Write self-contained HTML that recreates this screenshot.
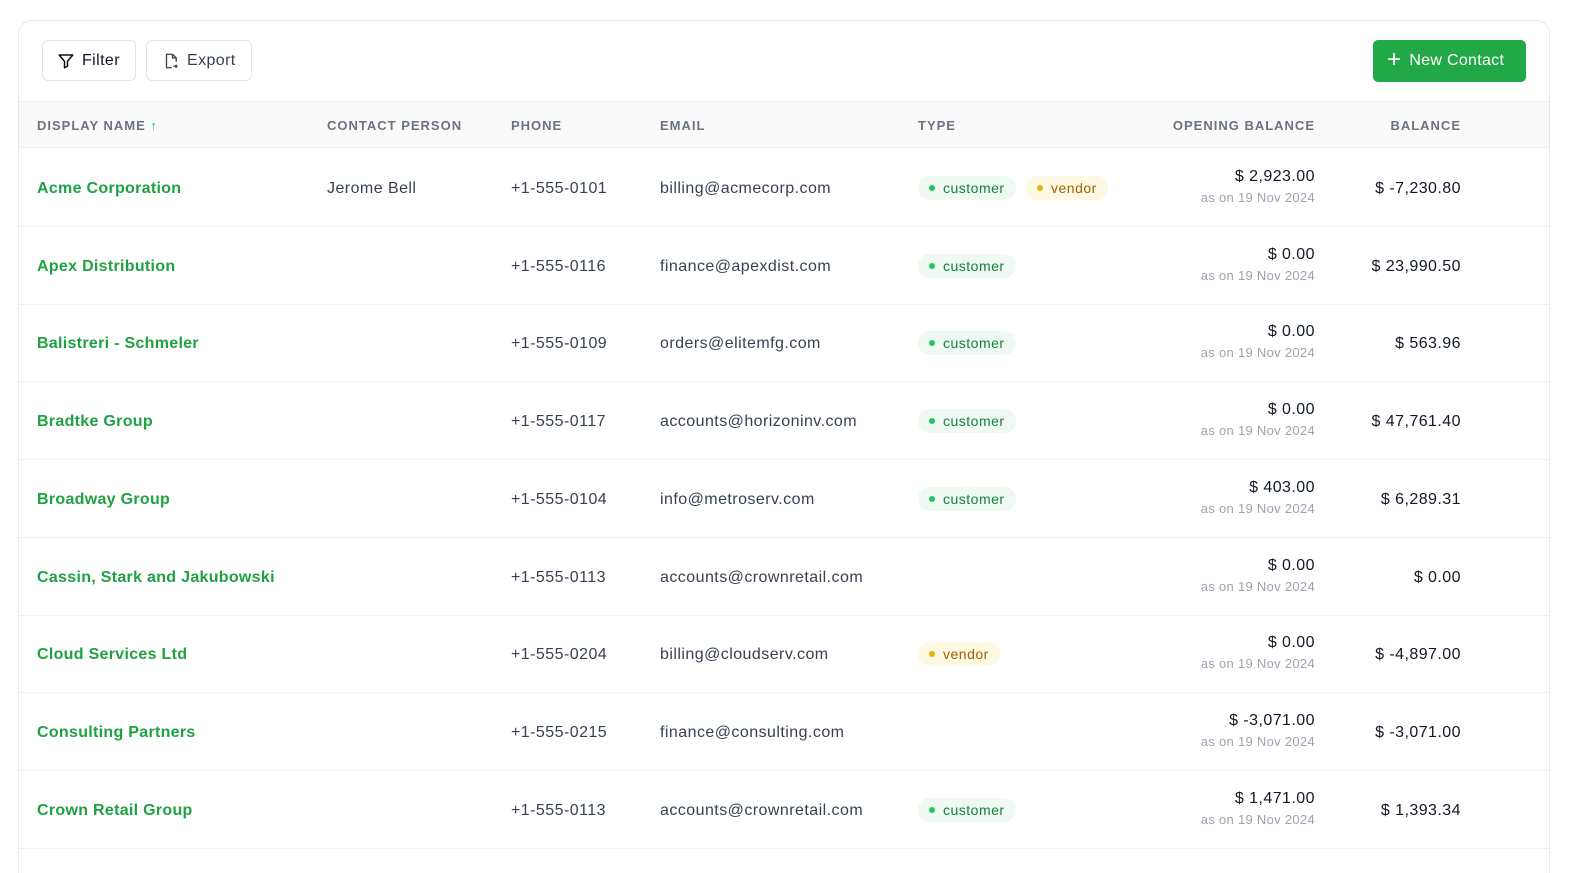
<!DOCTYPE html>
<html><head><meta charset="utf-8"><style>
*{box-sizing:border-box;margin:0;padding:0}
html,body{width:1581px;height:873px;overflow:hidden}
body{background:#fff;font-family:"Liberation Sans",sans-serif;position:relative}
.card{position:absolute;left:18px;top:20px;width:1532px;height:880px;border:1px solid #e5e7eb;border-radius:14px;overflow:hidden}
.btn{position:absolute;top:19px;height:41px;border:1px solid #e2e4e8;border-radius:6px;background:#fff;display:flex;align-items:center;font-size:16px;color:#111827;letter-spacing:0.4px}
.new{position:absolute;left:1354px;top:19px;width:153px;height:42px;background:#22a846;border-radius:5px;color:#fff;font-size:16px;display:flex;align-items:center;padding-left:14px;letter-spacing:0.3px}
.head{position:absolute;left:0;top:80px;width:100%;height:47px;background:#fafafa;border-top:1px solid #efefef;border-bottom:1px solid #efefef}
.h{position:absolute;top:16px;font-size:13px;letter-spacing:1px;color:#6b7280;font-weight:bold}
.row{position:absolute;left:0;width:100%;height:78px;border-bottom:1px solid #f1f1f1;font-size:16px;color:#374151;letter-spacing:0.45px}
.row span{position:absolute;top:31px}
.n{left:18px;color:#1fa142;font-weight:bold;letter-spacing:0.3px}
.ob{right:234px;top:19px!important;color:#111827;text-align:right}
.ob small{display:block;font-size:13px;color:#9ca3af;margin-top:4px;letter-spacing:0.3px}
.bal{right:88px;color:#111827}
.tag{top:27px!important;height:24px;border-radius:12px;font-size:14px;padding:4px 11px 0 25px;letter-spacing:0.5px}
.tag:before{content:"";position:absolute;left:11px;top:9px;width:6px;height:6px;border-radius:3px}
.c{background:#eefaf1;color:#15803d}.c:before{background:#22c55e}
.v{background:#fef9e3;color:#a16207}.v:before{background:#eab308}
</style></head><body>
<div class="card">
<div class="btn" style="left:23px;width:94px;padding-left:14px"><svg width="18" height="18" viewBox="0 0 24 24" fill="none" stroke="#111" stroke-width="2" stroke-linejoin="round"><path d="M3 4h18l-7 8.5V19l-4 2v-8.5z"/></svg><span style="margin-left:7px">Filter</span></div>
<div class="btn" style="left:127px;width:106px;padding-left:15px;color:#374151"><svg width="18" height="18" viewBox="0 0 24 24" fill="none" stroke="#444" stroke-width="1.8" stroke-linejoin="round"><path d="M14 3H6v18h7M14 3l5 5v5M14 3v5h5M15 19h5m-2-2 2 2-2 2"/></svg><span style="margin-left:7px">Export</span></div>
<div class="new"><span style="font-size:24px;font-weight:300;margin-right:8px;margin-top:-3px">+</span>New Contact</div>
<div class="head">
<span class="h" style="left:18px">DISPLAY NAME <span style="color:#22c55e">↑</span></span>
<span class="h" style="left:308px">CONTACT PERSON</span>
<span class="h" style="left:492px">PHONE</span>
<span class="h" style="left:641px">EMAIL</span>
<span class="h" style="left:899px">TYPE</span>
<span class="h" style="right:234px">OPENING BALANCE</span>
<span class="h" style="right:88px">BALANCE</span>
</div>
<div class="row" style="top:128px"><span class="n">Acme Corporation</span><span style="left:308px">Jerome Bell</span><span style="left:492px">+1-555-0101</span><span style="left:641px">billing@acmecorp.com</span><span class="tag c" style="left:899px">customer</span><span class="tag v" style="left:1007px">vendor</span><span class="ob">$ 2,923.00<small>as on 19 Nov 2024</small></span><span class="bal">$ -7,230.80</span></div>
<div class="row" style="top:206px"><span class="n">Apex Distribution</span><span style="left:492px">+1-555-0116</span><span style="left:641px">finance@apexdist.com</span><span class="tag c" style="left:899px">customer</span><span class="ob">$ 0.00<small>as on 19 Nov 2024</small></span><span class="bal">$ 23,990.50</span></div>
<div class="row" style="top:283px"><span class="n">Balistreri - Schmeler</span><span style="left:492px">+1-555-0109</span><span style="left:641px">orders@elitemfg.com</span><span class="tag c" style="left:899px">customer</span><span class="ob">$ 0.00<small>as on 19 Nov 2024</small></span><span class="bal">$ 563.96</span></div>
<div class="row" style="top:361px"><span class="n">Bradtke Group</span><span style="left:492px">+1-555-0117</span><span style="left:641px">accounts@horizoninv.com</span><span class="tag c" style="left:899px">customer</span><span class="ob">$ 0.00<small>as on 19 Nov 2024</small></span><span class="bal">$ 47,761.40</span></div>
<div class="row" style="top:439px"><span class="n">Broadway Group</span><span style="left:492px">+1-555-0104</span><span style="left:641px">info@metroserv.com</span><span class="tag c" style="left:899px">customer</span><span class="ob">$ 403.00<small>as on 19 Nov 2024</small></span><span class="bal">$ 6,289.31</span></div>
<div class="row" style="top:517px"><span class="n">Cassin, Stark and Jakubowski</span><span style="left:492px">+1-555-0113</span><span style="left:641px">accounts@crownretail.com</span><span class="ob">$ 0.00<small>as on 19 Nov 2024</small></span><span class="bal">$ 0.00</span></div>
<div class="row" style="top:594px"><span class="n">Cloud Services Ltd</span><span style="left:492px">+1-555-0204</span><span style="left:641px">billing@cloudserv.com</span><span class="tag v" style="left:899px">vendor</span><span class="ob">$ 0.00<small>as on 19 Nov 2024</small></span><span class="bal">$ -4,897.00</span></div>
<div class="row" style="top:672px"><span class="n">Consulting Partners</span><span style="left:492px">+1-555-0215</span><span style="left:641px">finance@consulting.com</span><span class="ob">$ -3,071.00<small>as on 19 Nov 2024</small></span><span class="bal">$ -3,071.00</span></div>
<div class="row" style="top:750px"><span class="n">Crown Retail Group</span><span style="left:492px">+1-555-0113</span><span style="left:641px">accounts@crownretail.com</span><span class="tag c" style="left:899px">customer</span><span class="ob">$ 1,471.00<small>as on 19 Nov 2024</small></span><span class="bal">$ 1,393.34</span></div>
</div>
</body></html>
